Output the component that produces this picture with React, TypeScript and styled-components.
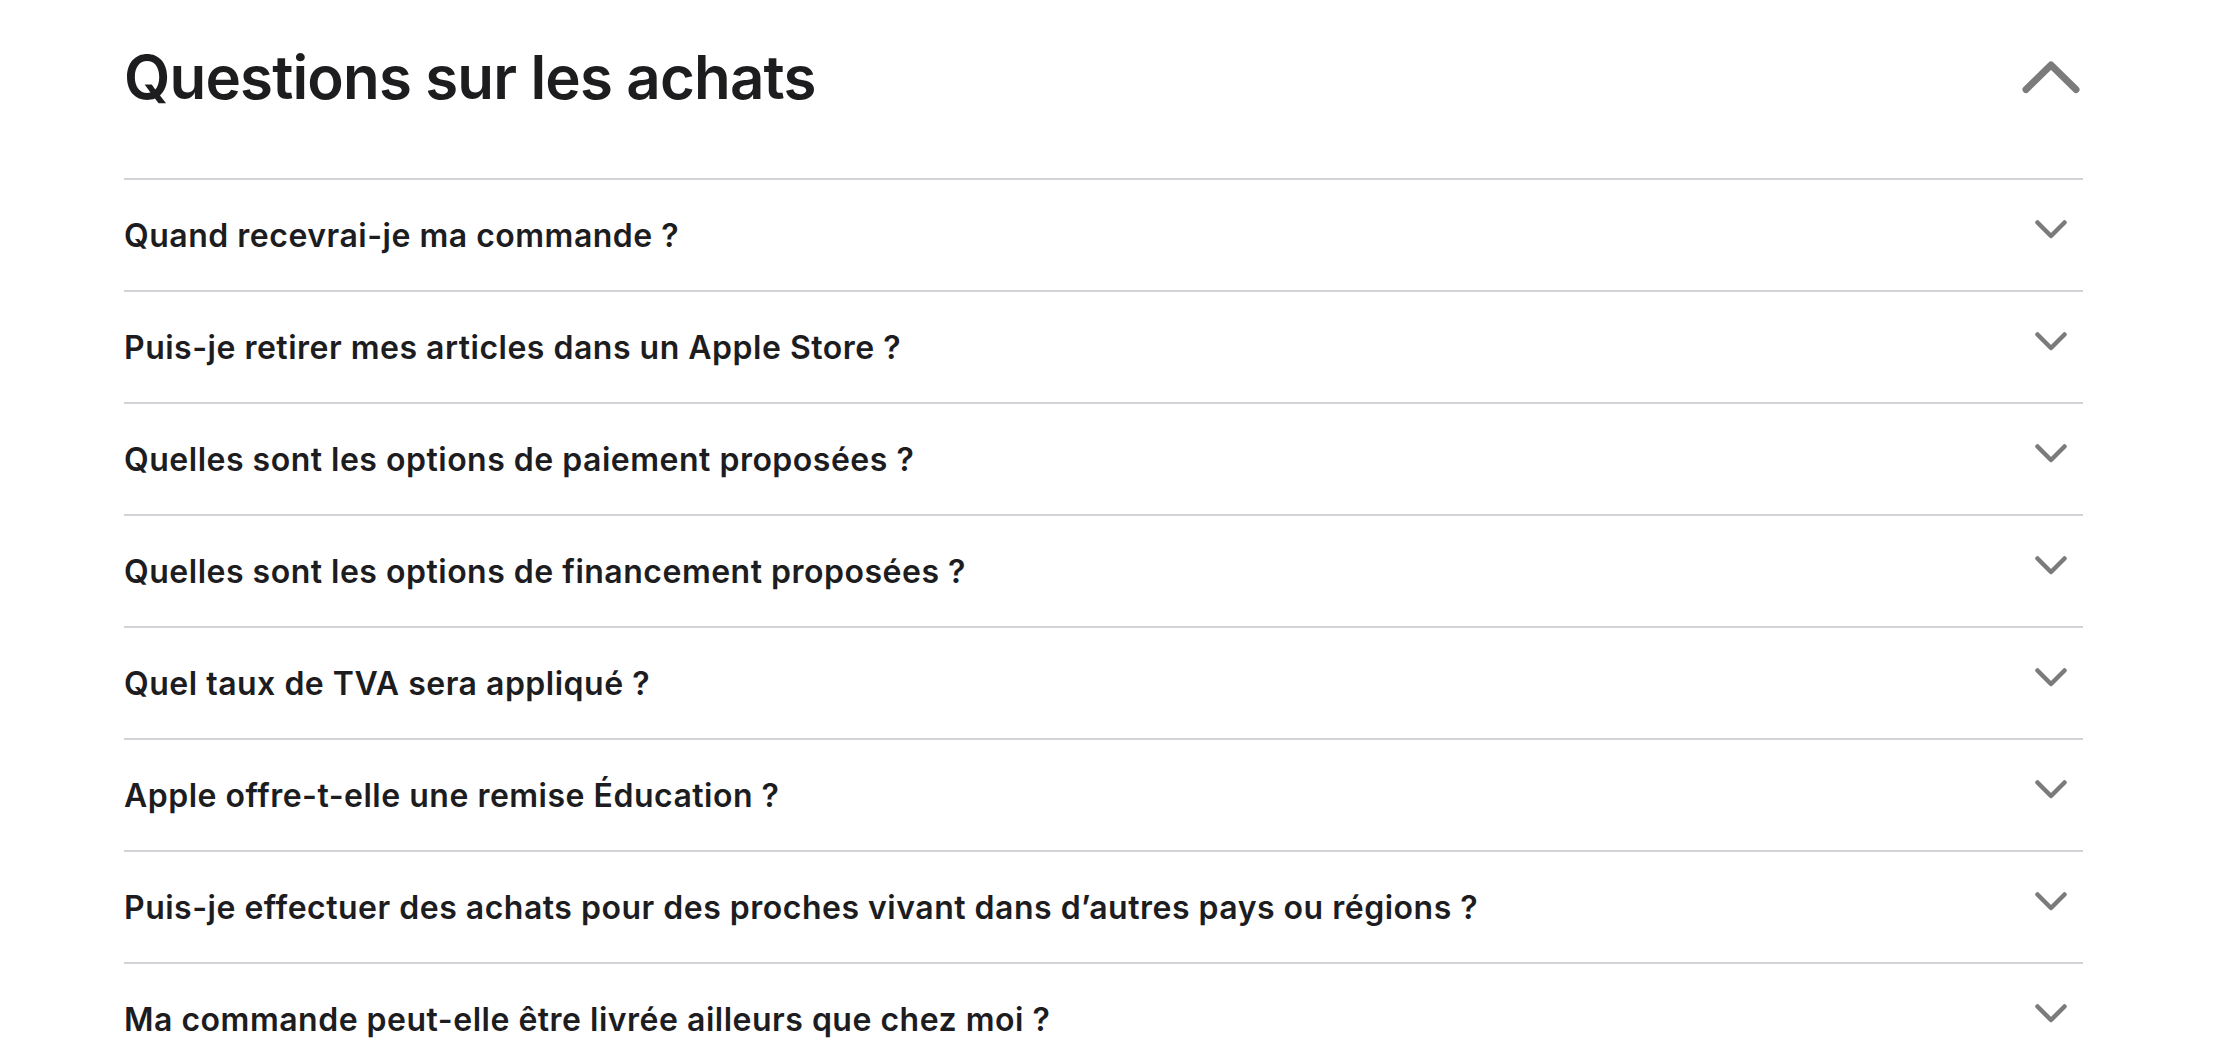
import React from "react";
import styled, { createGlobalStyle } from "styled-components";

const GlobalStyle = createGlobalStyle`
  body {
    margin: 0;
    background: #fff;
    font-family: Inter, "Noto Sans", "Liberation Sans", sans-serif;
    color: #1d1d1f;
  }
`;

const Page = styled.main`
  padding-left: 124px;
  width: 1959px;
`;

const Header = styled.header`
  display: flex;
  align-items: center;
  justify-content: space-between;
  height: 154px;
  margin-bottom: 24px;
`;

const Title = styled.h2`
  margin: 0;
  font-size: 60px;
  line-height: 1;
  font-weight: 600;
  letter-spacing: -0.85px;
`;

const IconSlot = styled.button`
  width: 64px;
  display: flex;
  justify-content: center;
  align-items: center;
  padding: 0;
  border: 0;
  background: none;
  color: #7b7b7b;
  cursor: pointer;
`;

const List = styled.ul`
  list-style: none;
  margin: 0;
  padding: 0;
  border-top: 2px solid #d2d2d7;
`;

const Row = styled.li`
  display: flex;
  align-items: center;
  justify-content: space-between;
  height: 110px;
  border-bottom: 2px solid #d2d2d7;
`;

const Question = styled.span`
  font-size: 32px;
  font-weight: 600;
  letter-spacing: 0.5px;
`;

const questions = [
  "Quand recevrai-je ma commande ?",
  "Puis-je retirer mes articles dans un Apple Store ?",
  "Quelles sont les options de paiement proposées ?",
  "Quelles sont les options de financement proposées ?",
  "Quel taux de TVA sera appliqué ?",
  "Apple offre-t-elle une remise Éducation ?",
  "Puis-je effectuer des achats pour des proches vivant dans d’autres pays ou régions ?",
  "Ma commande peut-elle être livrée ailleurs que chez moi ?",
];

const ChevronUp = () => (
  <svg width="58" height="34" viewBox="0 0 58 34" fill="none">
    <path
      d="M4 29.5 L29 5 L54 29.5"
      stroke="currentColor"
      strokeWidth="7"
      strokeLinecap="round"
      strokeLinejoin="round"
    />
  </svg>
);

const ChevronDown = () => (
  <svg width="32" height="30" viewBox="0 0 32 30" fill="none">
    <path
      d="M2.5 2.5 L16 16 L29.5 2.5"
      stroke="currentColor"
      strokeWidth="4.5"
      strokeLinecap="round"
      strokeLinejoin="round"
    />
  </svg>
);

const App = () => {
  return (
    <>
      <GlobalStyle />
      <Page>
        <Header>
          <Title>Questions sur les achats</Title>
          <IconSlot aria-label="Réduire">
            <ChevronUp />
          </IconSlot>
        </Header>
        <List>
          {questions.map((q) => (
            <Row key={q}>
              <Question>{q}</Question>
              <IconSlot aria-label="Développer">
                <ChevronDown />
              </IconSlot>
            </Row>
          ))}
        </List>
      </Page>
    </>
  );
};

export default App;
